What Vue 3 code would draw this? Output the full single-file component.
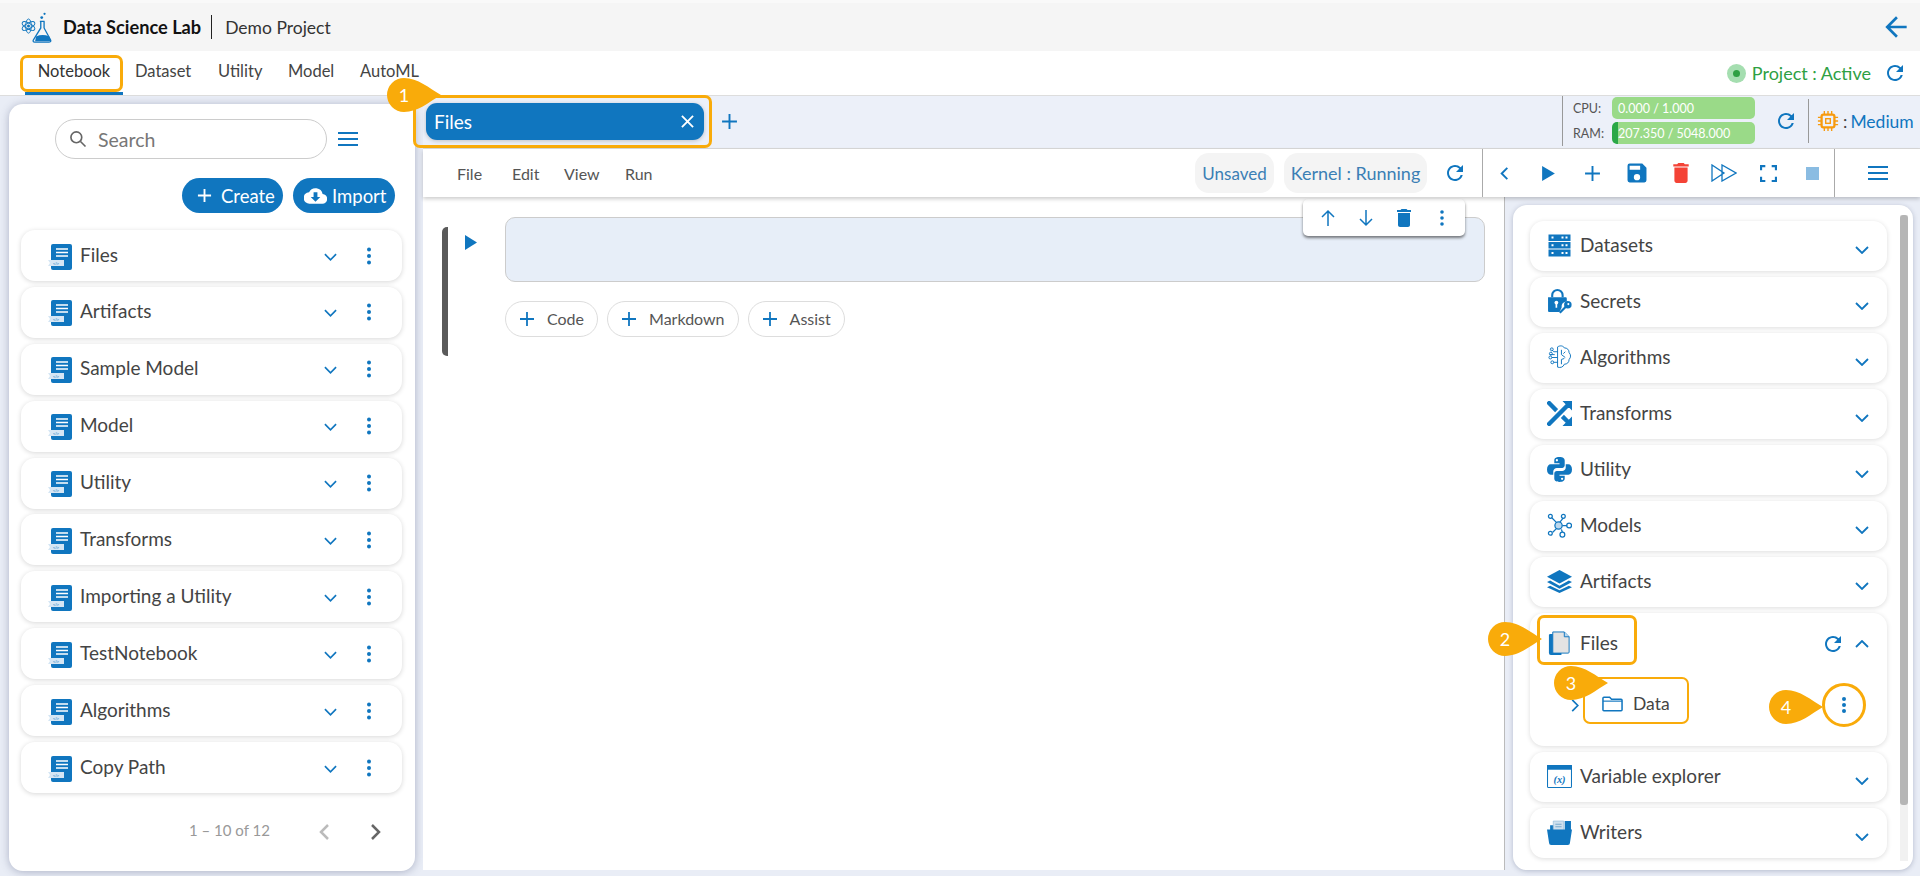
<script setup>
const leftItems = ['Files','Artifacts','Sample Model','Model','Utility','Transforms','Importing a Utility','TestNotebook','Algorithms','Copy Path']
const navItems = ['Notebook','Dataset','Utility','Model','AutoML']
const topItems = ['Datasets','Secrets','Algorithms','Transforms','Utility','Models','Artifacts']
const menu = ['File','Edit','View','Run']
const adds = ['Code','Markdown','Assist']
const REFRESH = 'M17.65 6.35A7.958 7.958 0 0 0 12 4c-4.42 0-7.99 3.58-7.99 8s3.57 8 7.99 8c3.73 0 6.84-2.55 7.73-6h-2.08A5.99 5.99 0 0 1 12 18c-3.31 0-6-2.69-6-6s2.69-6 6-6c1.66 0 3.14.69 4.22 1.78L13 11h7V4l-2.35 2.35z'
const BADGE = 'M54 17C42 10 31 0 17 0a17 17 0 0 0 0 34C31 34 42 24 54 17Z'
</script>

<template>
  <div class="page">
    <header class="head">
      <svg class="logo" viewBox="0 0 36 34" fill="none" stroke="#1076bf">
        <g stroke-width="1"><ellipse cx="9" cy="16" rx="7.5" ry="3" transform="rotate(30 9 16)"/><ellipse cx="9" cy="16" rx="7.5" ry="3" transform="rotate(90 9 16)"/><ellipse cx="9" cy="16" rx="7.5" ry="3" transform="rotate(150 9 16)"/></g>
        <circle cx="9" cy="16" r="1.6" fill="#1076bf" stroke="none"/>
        <path d="M21 11h5M22 11v7l-8 13q-.5 2 1.500 2h15q2.500 0 2-2l-7-13v-7" stroke-width="1.400"/>
        <path d="M17 27q7-3 14 0l2 5h-17z" fill="#1076bf" stroke="none"/>
        <circle cx="23" cy="7" r="1.500" fill="#1076bf" stroke="none"/><circle cx="26" cy="3" r="1.200" fill="#1076bf" stroke="none"/>
      </svg>
      <b class="brand">Data Science Lab</b>
      <span class="project">Demo Project</span>
      <svg class="back" viewBox="3 3 18 18"><path d="M20 11H7.800l5.600-5.600L12 4l-8 8 8 8 1.400-1.400L7.800 13H20z" fill="#1076bf"/></svg>
    </header>

    <nav class="nav">
      <a v-for="n in navItems" :key="n" class="nav-item" :class="{ active: n === 'Notebook' }">{{ n }}</a>
      <div class="status">
        <i class="dot"></i><span>Project : Active</span>
        <svg class="ref" viewBox="0 0 24 24"><path :d="REFRESH" fill="#1076bf"/></svg>
      </div>
    </nav>

    <div class="body">
      <aside class="left">
        <div class="search-row">
          <div class="search">
            <svg viewBox="0 0 24 24" fill="none" stroke="#666" stroke-width="2"><circle cx="10" cy="10" r="6.500"/><path d="m15 15 6 6"/></svg>
            <span>Search</span>
          </div>
          <svg class="ham" viewBox="0 0 20 14"><path d="M0 1h20M0 7h20M0 13h20" stroke="#1076bf" stroke-width="2"/></svg>
        </div>
        <div class="actions">
          <button class="btn create"><svg viewBox="0 0 16 16"><path d="M8 1v14M1 8h14" stroke="#fff" stroke-width="2"/></svg>Create</button>
          <button class="btn import">
            <svg viewBox="0 0 24 18"><path d="M19.400 7A7.500 7.500 0 0 0 5.300 5 6 6 0 0 0 6 17h13a5 5 0 0 0 .4-10z" fill="#fff"/><path d="M10 5h4v5h3l-5 5-5-5h3z" fill="#1076bf"/></svg>Import
          </button>
        </div>
        <ul class="left-list">
          <li v-for="item in leftItems" :key="item" class="left-item">
            <svg class="nb" viewBox="0 0 24 26">
              <rect x="3" y="0" width="21" height="26" rx="2" fill="#1076bf"/>
              <path d="M8 5h12M8 8.500h12M8 12h12" stroke="#fff" stroke-width="1.400"/>
              <path d="M0 16h16v6H0l2-3z" fill="#d5e6f4"/>
              <text x="8" y="21" font-size="4" fill="#1076bf" text-anchor="middle" font-family="Liberation Sans, sans-serif">&lt;/&gt;</text>
            </svg>
            <span class="name">{{ item }}</span>
            <svg class="chev" viewBox="0 0 14 8" fill="none"><path d="m1 1 6 6 6-6" stroke="#1076bf" stroke-width="1.800"/></svg>
            <svg class="kebab" viewBox="0 0 6 18"><circle cx="3" cy="2.500" r="2" /><circle cx="3" cy="9" r="2"/><circle cx="3" cy="15.500" r="2"/></svg>
          </li>
        </ul>
        <div class="pager">
          <span>1 – 10 of 12</span>
          <svg viewBox="0 0 12 18" fill="none"><path d="M10 2 3 9l7 7" stroke="#bbb" stroke-width="2.500"/></svg>
          <svg viewBox="0 0 12 18" fill="none"><path d="m2 2 7 7-7 7" stroke="#666" stroke-width="2.500"/></svg>
        </div>
      </aside>

      <main class="main">
        <div class="tabbar">
          <div class="tab"><span>Files</span>
            <svg viewBox="0 0 14 14"><path d="m1 1 12 12M13 1 1 13" stroke="#fff" stroke-width="2"/></svg>
          </div>
          <svg class="tab-add" viewBox="0 0 16 16"><path d="M8 1v14M1 8h14" stroke="#1076bf" stroke-width="1.800"/></svg>
          <div class="res">
            <div class="meters">
              <div class="meter"><label>CPU:</label><div class="bar"><span>0.000 / 1.000</span></div></div>
              <div class="meter"><label>RAM:</label><div class="bar ram"><span>207.350 / 5048.000</span></div></div>
            </div>
            <svg class="res-ref" viewBox="0 0 24 24"><path :d="REFRESH" fill="#1076bf"/></svg>
            <div class="size">
              <svg viewBox="0 0 24 24" fill="none" stroke="#f79a0e"><rect x="5" y="5" width="14" height="14" rx="2" stroke-width="2.500"/><rect x="9.500" y="9.500" width="5" height="5" stroke-width="1.500"/><path d="M8 1v4M12 1v4M16 1v4M8 19v4M12 19v4M16 19v4M1 8h4M1 12h4M1 16h4M19 8h4M19 12h4M19 16h4" stroke-width="1.500"/></svg>
              <em>:</em><span>Medium</span>
            </div>
          </div>
        </div>

        <div class="toolbar">
          <div class="menu"><span v-for="m in menu" :key="m" :class="'m-' + m">{{ m }}</span></div>
          <div class="pill unsaved">Unsaved</div>
          <div class="pill kernel">Kernel : Running</div>
          <svg class="tool-ref" viewBox="0 0 24 24"><path :d="REFRESH" fill="#1076bf"/></svg>
          <div class="tools">
            <div class="tool"><svg class="s16" viewBox="0 0 12 18" fill="none"><path d="M9 3 3 9l6 6" stroke="#1076bf" stroke-width="2"/></svg></div>
            <div class="tool"><svg class="s16" viewBox="0 0 14 16"><path d="M1 1v14l12-7z" fill="#1076bf"/></svg></div>
            <div class="tool"><svg class="s16" viewBox="0 0 16 16"><path d="M8 1v14M1 8h14" stroke="#1076bf" stroke-width="1.800"/></svg></div>
            <div class="tool"><svg class="s24" viewBox="2.500 2.500 19 19"><path d="M17 3H5a2 2 0 0 0-2 2v14a2 2 0 0 0 2 2h14a2 2 0 0 0 2-2V7l-4-4zm-5 16a3 3 0 1 1 0-6 3 3 0 0 1 0 6zm3-10H5V5h10v4z" fill="#1076bf"/></svg></div>
            <div class="tool"><svg class="s24" viewBox="3 2 18 20"><path d="M6 19c0 1.100.9 2 2 2h8c1.100 0 2-.9 2-2V7H6v12zM19 4h-3.500l-1-1h-5l-1 1H5v2h14V4z" fill="#f44336"/></svg></div>
            <div class="tool"><svg class="ff" viewBox="0 0 26 18" fill="none" stroke="#1076bf" stroke-width="1.300"><path d="M1 1v16l12-8zM11 1v16l14-8z"/></svg></div>
            <div class="tool"><svg class="s16" viewBox="0 0 16 16" fill="none"><path d="M1 5V1h4M11 1h4v4M15 11v4h-4M5 15H1v-4" stroke="#1076bf" stroke-width="2"/></svg></div>
            <div class="tool"><i class="stop"></i></div>
            <div class="tool last"><svg class="ham2" viewBox="0 0 20 14"><path d="M0 1h20M0 7h20M0 13h20" stroke="#1076bf" stroke-width="1.800"/></svg></div>
          </div>
        </div>

        <div class="work">
          <section class="cells">
            <div class="cell-bar"></div>
            <svg class="run" viewBox="0 0 12 15"><path d="M0 0v15l12-7.500z" fill="#1076bf"/></svg>
            <div class="cell-col">
              <div class="cell"></div>
              <div class="adds">
                <button v-for="a in adds" :key="a" class="add">
                  <svg viewBox="0 0 16 16"><path d="M8 1v14M1 8h14" stroke="#1076bf" stroke-width="1.800"/></svg>{{ a }}
                </button>
              </div>
            </div>
            <div class="cell-tools">
              <svg viewBox="0 0 16 18" fill="none"><path d="M8 17V2M2 8l6-6 6 6" stroke="#1076bf" stroke-width="1.500"/></svg>
              <svg viewBox="0 0 16 18" fill="none"><path d="M8 1v15M2 10l6 6 6-6" stroke="#1076bf" stroke-width="1.500"/></svg>
              <svg viewBox="5 3 14 18"><path d="M6 19c0 1.100.9 2 2 2h8c1.100 0 2-.9 2-2V7H6v12zM19 4h-3.500l-1-1h-5l-1 1H5v2h14V4z" fill="#1076bf"/></svg>
              <svg viewBox="0 0 6 18"><circle cx="3" cy="3" r="1.800" fill="#1076bf"/><circle cx="3" cy="9" r="1.800" fill="#1076bf"/><circle cx="3" cy="15" r="1.800" fill="#1076bf"/></svg>
            </div>
          </section>

          <div class="side">
            <div class="side-card">
              <div class="acc">
                <div v-for="t in topItems" :key="t" class="acc-item">
                  <svg v-if="t === 'Datasets'" class="ic" viewBox="-1.500 -1.500 25 25">
                    <path d="M0 0h22v6.500H0zM0 7.500h22V14H0zM0 15h22v7H0z" fill="#1076bf"/>
                    <path d="M3 3h2M13 3h2M17 3h2M3 10.700h2M13 10.700h2M17 10.700h2M3 18.500h2M13 18.500h2M17 18.500h2" stroke="#fff" stroke-width="2"/>
                  </svg>
                  <svg v-else-if="t === 'Secrets'" class="ic" viewBox="0 0 24 24" fill="#1076bf">
                    <path d="M4 8V6a6 6 0 0 1 12 0v2h-2V6a4 4 0 0 0-8 0v2z"/><path d="M1 8h17a1 1 0 0 1 1 1v3a5 5 0 0 0-5 6l-2 4H2a1 1 0 0 1-1-1z"/>
                    <circle cx="9" cy="13" r="1.800" fill="#fff"/><path d="M8.200 13h1.600v5H8.200z" fill="#fff"/>
                    <circle cx="20" cy="15" r="3.600"/><path d="m17.500 16-6 6 1.500 1.500 6-6z"/><circle cx="20.500" cy="14.500" r="1" fill="#fff"/>
                  </svg>
                  <svg v-else-if="t === 'Algorithms'" class="ic" viewBox="0 0 26 26" fill="none" stroke="#1076bf" stroke-width="1">
                    <path d="M11 2c3-2 6-1 7 1 3 0 5 2 5 5 2 2 2 5 0 7 0 3-2 5-5 5-1 3-4 4-7 3z"/>
                    <path d="M15 5v5l4 3M19 7l-2 2M15 20v-5l3-1"/>
                    <path d="M11 7H7M11 13H5M11 18H7M7 7l-2-2M8 10H3"/>
                    <circle cx="4" cy="9" r="1.500"/><circle cx="3.500" cy="13" r="1.500"/><circle cx="5.500" cy="18" r="1.500"/><circle cx="5" cy="4.500" r="1.500"/>
                  </svg>
                  <svg v-else-if="t === 'Transforms'" class="ic" viewBox="4 4 16 16"><path d="M10.590 9.170 5.410 4 4 5.410l5.170 5.170 1.420-1.410zM14.500 4l2.040 2.040L4 18.590 5.410 20 17.960 7.460 20 9.500V4h-5.500zm.33 9.410-1.410 1.410 3.130 3.130L14.500 20H20v-5.500l-2.040 2.040-3.130-3.130z" fill="#1076bf" stroke="#1076bf" stroke-width=".8"/></svg>
                  <svg v-else-if="t === 'Utility'" class="ic" viewBox="0 0 24 24" fill="#1076bf">
                    <path d="M11.900 0C8 0 7 1.700 7 3.300V6h5v1H3.500C1.500 7 0 9 0 12s1.500 5 3.500 5H6v-3c0-2 1.700-3.500 3.500-3.500h5c1.500 0 2.500-1.200 2.500-2.500V3.300C17 1.500 15.500 0 11.900 0zM9.500 2a1.100 1.100 0 1 1 0 2.200 1.100 1.100 0 0 1 0-2.200z"/>
                    <path d="M12.100 24c3.900 0 4.900-1.700 4.900-3.300V18h-5v-1h8.500c2 0 3.500-2 3.500-5s-1.500-5-3.500-5H18v3c0 2-1.700 3.500-3.500 3.500h-5C8 13.500 7 14.700 7 16v4.700C7 22.500 8.500 24 12.100 24zm2.400-2a1.100 1.100 0 1 1 0-2.200 1.100 1.100 0 0 1 0 2.200z"/>
                  </svg>
                  <svg v-else-if="t === 'Models'" class="ic" viewBox="0 0 26 26" fill="none" stroke="#1076bf" stroke-width="1.300">
                    <path d="M5 5l5 5M17 5l-4 5M16 13h5M6 20l4-4M15 17l1 3"/>
                    <circle cx="12" cy="13" r="3.800" fill="#bcd8ee"/><circle cx="3.500" cy="3.500" r="2"/><circle cx="17" cy="3.500" r="2"/><circle cx="23" cy="13" r="2.500"/><circle cx="3.500" cy="21" r="2"/><circle cx="16" cy="22.500" r="2.500"/>
                  </svg>
                  <svg v-else class="ic" viewBox="0 0 24 22" fill="#1076bf"><path d="M12 0 0 6.500 12 13l12-6.500z"/><path d="M3 10 0 11.500 12 18l12-6.500L21 10l-9 5z"/><path d="M3 15 0 16.500 12 22l12-5.500L21 15l-9 4.500z"/></svg>
                  <span class="acc-name">{{ t }}</span>
                  <svg class="acc-chev" viewBox="0 0 14 8" fill="none"><path d="m1 1 6 6 6-6" stroke="#1076bf" stroke-width="1.800"/></svg>
                </div>

                <div class="acc-item open">
                  <div class="open-head">
                    <svg class="ic" viewBox="0 0 24 26">
                      <path d="M2 3h12v22H3a2 2 0 0 1-2-2V4z" fill="#1076bf"/>
                      <path d="M5 1h12l5 5v16a1 1 0 0 1-1 1H6a1 1 0 0 1-1-1z" fill="#e3e3e3" stroke="#1076bf"/>
                      <path d="M17 1v5h5" fill="#bcd8ee" stroke="#1076bf"/>
                    </svg>
                    <span class="acc-name">Files</span>
                    <svg class="open-ref" viewBox="0 0 24 24"><path :d="REFRESH" fill="#1076bf"/></svg>
                    <svg class="open-chev" viewBox="0 0 14 8" fill="none"><path d="m1 7 6-6 6 6" stroke="#1076bf" stroke-width="1.800"/></svg>
                  </div>
                  <div class="tree">
                    <svg class="tree-chev" viewBox="0 0 8 14" fill="none"><path d="m1 1 6 6-6 6" stroke="#1076bf" stroke-width="1.800"/></svg>
                    <svg class="folder" viewBox="0 0 22 16" fill="none"><path d="M1 14V2a1 1 0 0 1 1-1h6l2 2h10a1 1 0 0 1 1 1v10a1 1 0 0 1-1 1H2a1 1 0 0 1-1-1z" stroke="#1076bf" stroke-width="1.600"/><path d="M1 5h20" stroke="#1076bf" stroke-width="1.200"/></svg>
                    <span class="data">Data</span>
                    <svg class="tree-kebab" viewBox="0 0 6 18"><circle cx="3" cy="3" r="2" fill="#1076bf"/><circle cx="3" cy="9" r="2" fill="#1076bf"/><circle cx="3" cy="15" r="2" fill="#1076bf"/></svg>
                  </div>
                </div>

                <div class="acc-item">
                  <svg class="ic" viewBox="0 0 24 24">
                    <rect x=".5" y="1.500" width="23" height="21" rx="1" fill="#fff" stroke="#1076bf"/><path d="M0 1h24v4.500H0z" fill="#1076bf"/>
                    <text x="12" y="18" font-size="10" font-style="italic" font-weight="700" fill="#1076bf" text-anchor="middle" font-family="Liberation Serif, serif">(x)</text>
                  </svg>
                  <span class="acc-name">Variable explorer</span>
                  <svg class="acc-chev" viewBox="0 0 14 8" fill="none"><path d="m1 1 6 6 6-6" stroke="#1076bf" stroke-width="1.800"/></svg>
                </div>
                <div class="acc-item">
                  <svg class="ic" viewBox="0 0 24 24">
                    <path d="M3 5h4v5H3zM17 1h6v9h-6z" fill="#1076bf"/>
                    <path d="M6 1h10v9H6z" fill="#cfe0ee" stroke="#8fb8d8" stroke-width=".6"/>
                    <path d="M8 4h6M8 6.500h6" stroke="#7aa9cc"/>
                    <path d="M0 9h24l-2 13a2 2 0 0 1-2 2H4a2 2 0 0 1-2-2z" fill="#1076bf"/>
                  </svg>
                  <span class="acc-name">Writers</span>
                  <svg class="acc-chev" viewBox="0 0 14 8" fill="none"><path d="m1 1 6 6 6-6" stroke="#1076bf" stroke-width="1.800"/></svg>
                </div>
              </div>
              <div class="scroll"><div class="thumb"></div></div>
            </div>
          </div>
        </div>
      </main>
    </div>

    <div class="hl hl-nb"></div>
    <div class="hl hl-tab"></div>
    <div class="hl hl-files"></div>
    <div class="hl hl-data"></div>
    <div class="hl hl-kebab"></div>
    <div class="badge b1"><svg viewBox="0 0 54 34"><path :d="BADGE" fill="#f9ab0a"/></svg><span>1</span></div>
    <div class="badge b2"><svg viewBox="0 0 54 34"><path :d="BADGE" fill="#f9ab0a"/></svg><span>2</span></div>
    <div class="badge b3"><svg viewBox="0 0 54 34"><path :d="BADGE" fill="#f9ab0a"/></svg><span>3</span></div>
    <div class="badge b4"><svg viewBox="0 0 54 34"><path :d="BADGE" fill="#f9ab0a"/></svg><span>4</span></div>
  </div>
</template>

<style>
html, body { margin: 0; background: #e9edf6; overflow: hidden; }
</style>

<style scoped>
* { box-sizing: border-box; }
svg { display: block; flex: none; }
.page { position: relative; width: 1920px; height: 876px; overflow: hidden; background: #e9edf6; display: flex; flex-direction: column; font-family: Lato, "Noto Sans", sans-serif; color: #444; padding-top: 3px; box-shadow: inset 0 3px 0 #f9f9f9; }
.head { height: 48px; flex: none; background: #f5f5f5; display: flex; align-items: center; padding-left: 20px; padding-right: 12px; }
.logo { width: 34px; height: 34px; margin-right: 9px; }
.brand { font-size: 18.200px; color: #111; font-weight: 700; padding-right: 10px; border-right: 1px solid #222; line-height: 24px; white-space: nowrap; }
.project { font-size: 17.500px; color: #333; margin-left: 13px; }
.back { width: 24px; height: 24px; margin-left: auto; }
.nav { height: 45px; flex: none; background: #fff; display: flex; align-items: stretch; padding-left: 25px; border-bottom: 1px solid #ddd; font-size: 16.500px; color: #444; }
.nav-item { line-height: 40px; white-space: nowrap; padding: 0; }
.nav-item:nth-child(2) { width: 83px; }
.nav-item:nth-child(3) { width: 70px; }
.nav-item:nth-child(4) { width: 72px; }
.nav-item.active { border-bottom: 3px solid #1076bf; color: #333; width: 98px; margin-right: 12px; text-align: center; }
.status { margin-left: auto; display: flex; align-items: center; color: #2ea043; font-size: 18px; padding-right: 13px; }
.dot { width: 19px; height: 19px; border-radius: 50%; background: #a5deb0; margin-right: 6px; position: relative; }
.dot::after { content: ""; position: absolute; left: 6px; top: 6px; width: 7px; height: 7px; border-radius: 50%; background: #2ea043; }
.ref { width: 24px; height: 24px; margin-left: 12px; }
.body { flex: 1; display: flex; min-height: 0; }
.left { width: 406px; margin: 8px 8px 5px 9px; background: #fff; border-radius: 14px; box-shadow: 0 1px 8px rgba(60, 70, 110, .35); padding: 16px 13px 0 12px; display: flex; flex-direction: column; flex: none; }
.search-row { display: flex; align-items: center; padding-left: 34px; margin-top: -1px; }
.search { width: 272px; height: 40px; border: 1px solid #ccc; border-radius: 20px; display: flex; align-items: center; padding-left: 12px; font-size: 19.500px; color: #777; }
.search svg { width: 20px; height: 20px; margin-right: 10px; }
.ham { width: 20px; height: 14px; margin-left: 11px; }
.actions { display: flex; justify-content: flex-end; gap: 10px; margin-top: 19px; padding-right: 7px; }
.btn { height: 35px; border: 0; border-radius: 18px; background: #1076bf; color: #fff; display: flex; align-items: center; font: 18.500px Lato, sans-serif; }
.create { width: 101px; padding-left: 15px; }
.create svg { width: 15px; height: 15px; margin-right: 9px; }
.import { width: 102px; padding-left: 11px; }
.import svg { width: 23px; height: 18px; margin-right: 5px; }
.left-list { list-style: none; margin: 17px 0 0; padding: 0; display: flex; flex-direction: column; gap: 5.900px; }
.left-item { height: 51px; background: #fff; border-radius: 14px; box-shadow: 0 1px 5px rgba(0, 0, 0, .16); display: flex; align-items: center; padding-left: 27px; }
.nb { width: 24px; height: 26px; margin-top: 2px; }
.name { font-size: 19px; color: #444; margin-left: 8px; margin-top: -3px; }
.chev { width: 13px; height: 8px; margin-left: auto; margin-top: 2px; }
.kebab { width: 6px; height: 18px; margin-left: 29px; margin-right: 30px; fill: #1076bf; }
.pager { margin-top: auto; height: 68px; display: flex; align-items: flex-start; padding-left: 168px; color: #999; font-size: 15px; }
.pager span { flex: none; line-height: 20px; margin-top: 17px; width: 129px; white-space: nowrap; }
.pager svg { width: 12px; height: 18px; margin-top: 20px; }
.pager svg:last-child { margin-left: 40px; }
.main { flex: 1; display: flex; flex-direction: column; min-width: 0; }
.tabbar { height: 53px; flex: none; background: #ecf0f9; border-bottom: 1px solid #d9d9d9; display: flex; align-items: flex-start; padding-left: 3px; }
.tab { width: 278px; height: 37px; margin-top: 7px; border-radius: 11px; background: #1076bf; color: #fff; font-size: 19px; display: flex; align-items: center; justify-content: space-between; padding: 0 10px 0 8px; box-shadow: 0 1px 4px rgba(0, 0, 0, .2); }
.tab svg { width: 13px; height: 13px; }
.tab-add { width: 17px; height: 17px; margin: 17px 0 0 17px; }
.res { margin-left: auto; display: flex; align-items: center; height: 50px; }
.meters { border-left: 1px solid #999; padding-left: 10px; width: 193px; display: flex; flex-direction: column; gap: 3px; height: 50px; padding-top: 1px; }
.meter { display: flex; align-items: center; height: 22px; font-size: 12.500px; color: #555; }
.meter label { width: 39px; }
.bar { width: 143px; height: 22px; border-radius: 5px; background: #9ada88; color: #fff; font-size: 12.500px; display: flex; align-items: center; padding-left: 6px; }
.bar.ram { border-left: 6px solid #2aa847; padding-left: 0; }
.res-ref { width: 24px; height: 24px; margin-left: 19px; }
.size { display: flex; align-items: center; height: 44px; border-left: 1px solid #999; margin-left: 10px; padding-left: 8px; width: 112px; color: #1076bf; font-size: 17.500px; white-space: nowrap; }
.size svg { width: 22px; height: 22px; }
.size em { font-style: normal; color: #444; margin: 0 3px 0 4px; }
.toolbar { height: 48px; flex: none; background: #fff; display: flex; align-items: center; box-shadow: 0 2px 4px rgba(0, 0, 0, .2); position: relative; z-index: 1; }
.menu { position: relative; display: flex; padding-left: 34px; font-size: 16px; color: #555; }
.m-File { width: 55px; } .m-Edit { width: 52px; } .m-View { width: 61px; }
.pill { height: 40px; background: #f4f4f4; border-radius: 14px; display: flex; align-items: center; justify-content: center; color: #3b7fb5; font-size: 17px; }
.unsaved { width: 79px; margin-left: auto; }
.kernel { width: 143px; margin-left: 10px; font-size: 18px; white-space: nowrap; }
.tool-ref { width: 24px; height: 24px; margin-left: 16px; margin-right: 15px; }
.tools { display: flex; align-items: stretch; height: 48px; border-left: 1px solid #aaa; width: 438px; flex: none; }
.tool { width: 44px; display: flex; align-items: center; justify-content: center; }
.tool.last { width: 86px; border-left: 1px solid #aaa; }
.s16 { width: 17px; height: 17px; }
.s24 { width: 20px; height: 22px; }
.ff { width: 26px; height: 18px; }
.stop { width: 13px; height: 13px; background: #8abce2; }
.ham2 { width: 20px; height: 14px; }
.work { flex: 1; display: flex; min-height: 0; padding-bottom: 6px; }
.cells { position: relative; width: 1082px; background: #fff; border-right: 1px solid #bbb; display: flex; align-items: flex-start; padding-top: 20px; flex: none; }
.cell-bar { width: 6px; height: 129px; background: #5a5a5a; border-radius: 5px 0 0 5px; margin: 10px 0 0 19px; }
.run { width: 12px; height: 15px; margin: 18px 0 0 17px; }
.cell-col { margin-left: 28px; width: 980px; }
.cell { height: 65px; background: #e7eef8; border: 1px solid #ccc; border-radius: 10px; }
.adds { display: flex; gap: 9px; margin-top: 19px; }
.add { height: 36px; border: 1px solid #ddd; background: #fff; border-radius: 18px; display: flex; align-items: center; padding: 0 13px; font: 16px/32px Lato, sans-serif; color: #555; }
.add svg { width: 16px; height: 16px; margin-right: 12px; }
.cell-tools { position: absolute; left: 880px; top: 2px; width: 162px; height: 37px; background: #fff; border-radius: 5px; box-shadow: 0 2px 3px rgba(0, 0, 0, .5); display: flex; align-items: center; gap: 22px; padding-left: 17px; }
.cell-tools svg { width: 16px; height: 18px; }
.side { flex: 1; padding: 8px 7px 0 8px; }
.side-card { height: 100%; background: #fff; border-radius: 14px; box-shadow: 0 1px 5px rgba(60, 70, 110, .3); display: flex; padding: 16px 0 0 17px; gap: 13px; }
.acc { width: 357px; flex: none; display: flex; flex-direction: column; gap: 6px; }
.acc-item { height: 50px; flex: none; background: #fff; border-radius: 14px; box-shadow: 0 1px 5px rgba(0, 0, 0, .14); display: flex; align-items: center; padding-left: 17px; }
.ic { width: 25px; height: 25px; margin-top: -2px; }
.acc-name { font-size: 19px; color: #444; margin-left: 8px; margin-top: -3px; }
.acc-chev { width: 14px; height: 8px; margin-left: auto; margin-right: 18px; margin-top: 8px; }
.open { height: 133px; flex-direction: column; align-items: stretch; padding-left: 0; }
.open-head { height: 50px; display: flex; align-items: center; padding-left: 17px; margin-top: 6px; flex: none; }
.open-ref { width: 24px; height: 24px; margin-left: auto; }
.open-chev { width: 14px; height: 8px; margin: 0 18px 0 10px; }
.tree { display: flex; align-items: center; height: 40px; margin-top: 16px; }
.tree-chev { width: 8px; height: 13px; margin-left: 41px; }
.folder { width: 21px; height: 16px; margin-left: 23px; margin-top: -3px; }
.data { font-size: 17.500px; color: #444; margin-left: 10px; margin-top: -3px; }
.tree-kebab { width: 6px; height: 18px; margin-left: auto; margin-right: 40px; }
.scroll { width: 8px; margin: -6px 0 9px; background: #f1f1f1; }
.thumb { height: 590px; background: #b5b5b5; border-radius: 3px; }
.hl { position: absolute; border: 3px solid #f9ab0a; border-radius: 7px; pointer-events: none; }
.hl-nb { left: 20px; top: 55px; width: 103px; height: 37px; }
.hl-tab { left: 413px; top: 95px; width: 299px; height: 53px; }
.hl-files { left: 1537px; top: 615px; width: 100px; height: 50px; }
.hl-data { left: 1583px; top: 677px; width: 106px; height: 47px; border-width: 2px; }
.hl-kebab { left: 1822px; top: 683px; width: 44px; height: 44px; border-radius: 50%; }
.badge { position: absolute; width: 54px; height: 34px; }
.badge svg { width: 54px; height: 34px; }
.badge span { position: absolute; left: 0; top: 0; width: 34px; text-align: center; color: #fff; font: 18px/34px Lato, sans-serif; }
.b1 { left: 387px; top: 78px; }
.b2 { left: 1488px; top: 622px; }
.b3 { left: 1554px; top: 666px; }
.b4 { left: 1769px; top: 690px; }
</style>
